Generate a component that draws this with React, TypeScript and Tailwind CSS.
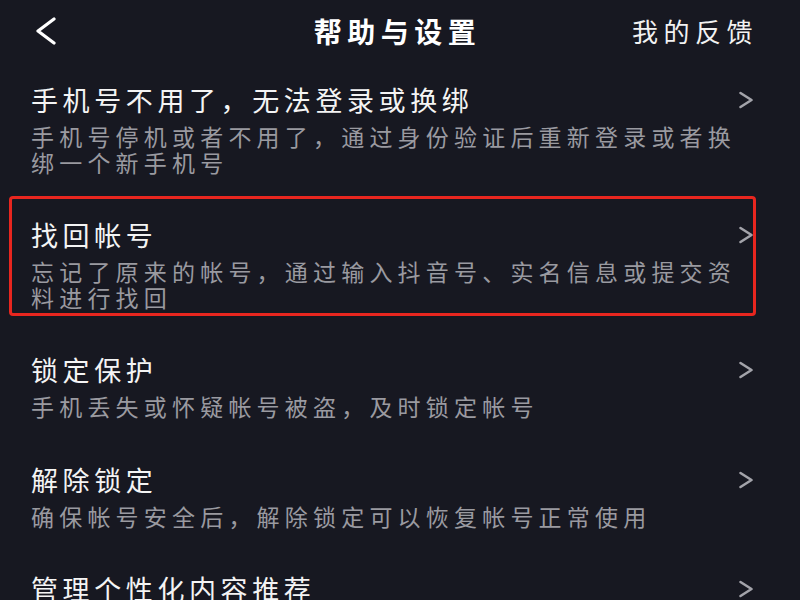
const font = { fontFamily: '"Noto Sans CJK SC", "Noto Sans", sans-serif' };

interface Entry {
  title: string;
  desc: string;
  marked?: boolean;
}

const entries: Entry[] = [
  { title: "手机号不用了，无法登录或换绑", desc: "手机号停机或者不用了，通过身份验证后重新登录或者换绑一个新手机号" },
  { title: "找回帐号", desc: "忘记了原来的帐号，通过输入抖音号、实名信息或提交资料进行找回", marked: true },
  { title: "锁定保护", desc: "手机丢失或怀疑帐号被盗，及时锁定帐号" },
  { title: "解除锁定", desc: "确保帐号安全后，解除锁定可以恢复帐号正常使用" },
  { title: "管理个性化内容推荐", desc: "管理个性化内容推荐相关设置" },
];

const Chevron = () => (
  <svg width="16" height="18" viewBox="0 0 16 18" fill="none" className="shrink-0">
    <polyline points="2.5,2 13.5,9 2.5,16" stroke="#a3a3aa" strokeWidth="2.6" strokeLinecap="round" strokeLinejoin="round" />
  </svg>
);

const Row = ({ entry }: { entry: Entry }) => (
  <div className="relative pl-[31px] pr-[46px] py-[21px]">
    {entry.marked && (
      <div className="absolute left-[9px] top-0 w-[747px] h-[120px] border-[3px] border-[#e8261f] rounded-[4px]" />
    )}
    <div className="flex items-center justify-between h-[36px]">
      <div className="text-[27px] tracking-[4.6px] text-[#f4f4f4] leading-[36px] whitespace-nowrap">{entry.title}</div>
      <Chevron />
    </div>
    <div className="mt-[6px] text-[23px] tracking-[5.2px] leading-[25.5px] text-[#9a9aa0]">{entry.desc}</div>
  </div>
);

export default function App() {
  return (
    <div className="w-[800px] h-[600px] overflow-hidden bg-[#171821]" style={font}>
      <div className="grid grid-cols-[1fr_auto_1fr] items-center h-[61px] pl-[35px] pr-[42px]">
        <div className="justify-self-start">
          <svg width="22" height="28" viewBox="0 0 22 28" fill="none">
            <polyline points="19,2 3,14 19,26" stroke="#ffffff" strokeWidth="3.2" strokeLinecap="round" strokeLinejoin="round" />
          </svg>
        </div>
        <div className="text-[28px] font-bold tracking-[5.5px] text-white pl-[2px]">帮助与设置</div>
        <div className="justify-self-end text-[26px] tracking-[5.5px] text-[#f2f2f2]">我的反馈</div>
      </div>
      <div className="flex flex-col">
        {entries.map(e => <Row key={e.title} entry={e} />)}
      </div>
    </div>
  );
}
